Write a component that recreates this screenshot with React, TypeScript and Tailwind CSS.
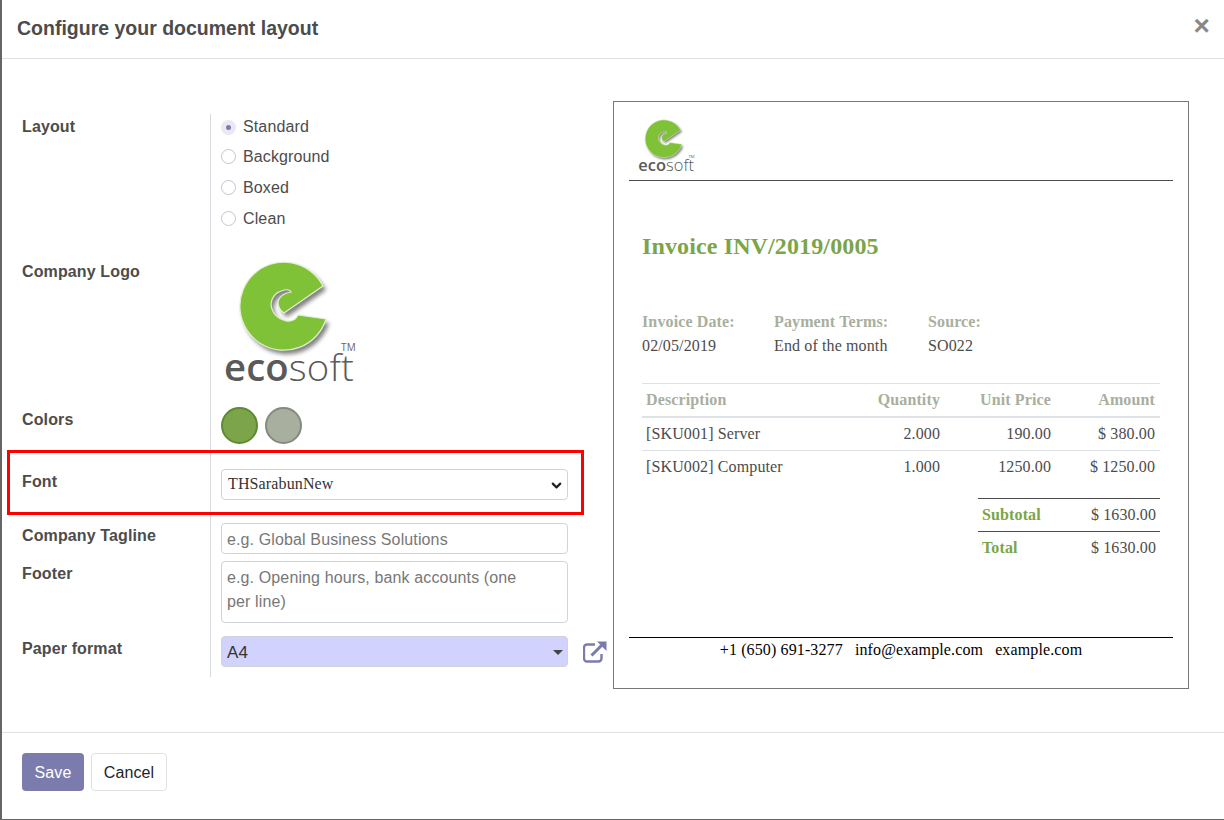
import { ChevronDown } from "lucide-react";

function EcosoftLogo({ className, id }: { className: string; id: string }) {
  const e =
    "M323 286 A44 44 0 1 0 326 319 L298 315 Q295 322 286 321 Q272 317 271 304 Q272 293 284 290 Q290 289 291 292 Q280 294 278 302 Q278 309 284 313 Z";
  return (
    <svg viewBox="221 259 140 126" className={`overflow-visible ${className}`}>
      <defs>
        <filter id={id} x="-20%" y="-20%" width="140%" height="140%">
          <feGaussianBlur stdDeviation="2" />
        </filter>
      </defs>
      <path d={e} fill="#555" opacity="0.75" transform="translate(3 4)" filter={`url(#${id})`} />
      <path d={e} fill="#7fc137" stroke="#e4efd2" strokeWidth="1.2" />
      <text
        x="224"
        y="381"
        fontFamily="'Open Sans', sans-serif"
        fontSize="37"
        fill="#5a5a5a"
        textLength="130"
        lengthAdjust="spacingAndGlyphs"
      >
        <tspan fontWeight="600">eco</tspan>
        <tspan fontWeight="300">soft</tspan>
      </text>
      <text x="341" y="351" fontFamily="'Open Sans', sans-serif" fontSize="10" fill="#666">
        TM
      </text>
    </svg>
  );
}

function Radio({ label, checked, first }: { label: string; checked?: boolean; first?: boolean }) {
  return (
    <div className={`flex items-center gap-[7px] ${first ? "h-[30px] pt-[2px]" : "h-[31px]"}`}>
      {checked ? (
        <span className="w-[15px] h-[15px] rounded-full bg-[#e9e9f3] flex items-center justify-center">
          <span className="w-[5px] h-[5px] rounded-full bg-[#7c7bad]" />
        </span>
      ) : (
        <span className="w-[15px] h-[15px] rounded-full border border-[#c3c6d4] bg-white" />
      )}
      <span>{label}</span>
    </div>
  );
}

function Row({
  label,
  height,
  children,
}: {
  label: string;
  height: string;
  children: React.ReactNode;
}) {
  return (
    <div className={`flex ${height}`}>
      <div className="w-[188px] shrink-0 font-bold pt-px">{label}</div>
      <div className="border-l border-[#d8dadd] pl-[10px] flex-1 min-w-0">{children}</div>
    </div>
  );
}

export default function App() {
  return (
    <div className="h-[820px] w-[1224px] bg-[#666] pl-[2px] pb-px overflow-hidden font-['Liberation_Sans',Arial,sans-serif] text-base tracking-[0.125px] text-[#4c4c4c]">
      <div className="relative h-full bg-white flex flex-col">
        {/* En-tête */}
        <div className="h-[59px] shrink-0 border-b border-[#dee2e6] flex items-center justify-between pl-[15px] pr-[14px]">
          <h4 className="text-[19.5px] tracking-normal font-bold leading-none -mt-[1px]">Configure your document layout</h4>
          <span className="text-[28px] font-bold leading-none text-[#888] -mt-[6px]">×</span>
        </div>

        {/* Corps */}
        <div className="flex-1 flex min-h-0">
          <div className="w-[611px] shrink-0 pl-[20px] pt-[55px]">
            <Row label="Layout" height="h-[145px]">
              <div className="-mt-[3px]">
                <Radio label="Standard" checked first />
                <Radio label="Background" />
                <Radio label="Boxed" />
                <Radio label="Clean" />
              </div>
            </Row>
            <Row label="Company Logo" height="h-[148px]">
              <EcosoftLogo id="logo-form" className="w-[140px] h-[126px]" />
            </Row>
            <Row label="Colors" height="h-[62px]">
              <div className="flex gap-[7px]">
                <span className="w-[37px] h-[37px] rounded-full bg-[#7ba548] border-2 border-[#5f8a35]" />
                <span className="w-[37px] h-[37px] rounded-full bg-[#a9af9e] border-2 border-[#858a7e]" />
              </div>
            </Row>
            <Row label="Font" height="h-[54px]">
              <div className="relative w-[347px]">
                <select className="block w-full h-[31px] appearance-none border border-[#ced4da] rounded-[4px] bg-white pl-[6px] pb-[2px] font-['Liberation_Serif',serif] text-[#333] outline-none">
                  <option>THSarabunNew</option>
                </select>
                <ChevronDown size={15} strokeWidth={3.5} className="absolute right-[4px] top-[9px] text-[#222]" />
              </div>
            </Row>
            <Row label="Company Tagline" height="h-[38px]">
              <input
                placeholder="e.g. Global Business Solutions"
                className="block w-[347px] h-[31px] border border-[#ced4da] rounded-[4px] px-[5px] pt-[2px] placeholder:text-[#777] outline-none"
              />
            </Row>
            <Row label="Footer" height="h-[75px]">
              <textarea
                placeholder="e.g. Opening hours, bank accounts (one per line)"
                className="block w-[347px] h-[62px] border border-[#ced4da] rounded-[4px] pl-[5px] pr-[30px] py-[4px] leading-6 placeholder:text-[#777] outline-none resize-none"
              />
            </Row>
            <Row label="Paper format" height="h-[41px]">
              <div className="flex items-start">
                <div className="relative w-[347px]">
                  <select className="block w-full h-[31px] appearance-none border border-[#ced4da] rounded-[4px] bg-[#d2d2ff] px-[5px] pt-[2px] text-[17px] text-[#333] outline-none">
                    <option>A4</option>
                  </select>
                  <span className="absolute right-[5px] top-[14px] border-x-[5px] border-x-transparent border-t-[5px] border-t-[#444]" />
                </div>
                <svg viewBox="0 0 24 22" className="w-[24px] h-[22px] ml-[15px] mt-[5px] text-[#7c7bad]" fill="none" stroke="currentColor">
                  <path d="M18.5 13v4.5a3 3 0 0 1-3 3H4a3 3 0 0 1-3-3V6.5a3 3 0 0 1 3-3h8" strokeWidth="2.4" />
                  <path d="M8.5 14.5 20 3" strokeWidth="3" />
                  <path d="M14 0.5h9.5V10z" fill="currentColor" stroke="none" />
                </svg>
              </div>
            </Row>
          </div>

          {/* Aperçu */}
          <div className="pt-[42px]">
            <div className="w-[576px] h-[588px] border border-[#777] bg-white font-['Liberation_Serif',serif] px-[15px] flex flex-col">
              <div className="h-[79px] shrink-0 border-b border-[#4c4c4c] pl-[8px] pt-[16px]">
                <EcosoftLogo id="logo-preview" className="w-[60px] h-[55px]" />
              </div>
              <div className="px-[13px] flex-1">
                <h2 className="text-[24px] leading-[30px] font-bold text-[#7ba548] mt-[50px]">Invoice INV/2019/0005</h2>
                <div className="flex mt-[49px] leading-6">
                  <div className="w-[132px]">
                    <div className="font-bold text-[#a9af9e]">Invoice Date:</div>
                    <div>02/05/2019</div>
                  </div>
                  <div className="w-[154px]">
                    <div className="font-bold text-[#a9af9e]">Payment Terms:</div>
                    <div>End of the month</div>
                  </div>
                  <div>
                    <div className="font-bold text-[#a9af9e]">Source:</div>
                    <div>SO022</div>
                  </div>
                </div>
                <table className="w-[518px] mt-[25px] border-t border-[#dee2e6]">
                  <thead>
                    <tr className="h-[33px] font-bold text-[#a9af9e] border-b-2 border-[#dee2e6]">
                      <td className="pl-[4px]">Description</td>
                      <td className="text-right w-[100px]">Quantity</td>
                      <td className="text-right w-[111px]">Unit Price</td>
                      <td className="text-right w-[109px] pr-[5px]">Amount</td>
                    </tr>
                  </thead>
                  <tbody>
                    <tr className="h-[34px] border-b border-[#dee2e6]">
                      <td className="pl-[4px]">[SKU001] Server</td>
                      <td className="text-right">2.000</td>
                      <td className="text-right">190.00</td>
                      <td className="text-right pr-[5px]">$ 380.00</td>
                    </tr>
                    <tr className="h-[33px]">
                      <td className="pl-[4px]">[SKU002] Computer</td>
                      <td className="text-right">1.000</td>
                      <td className="text-right">1250.00</td>
                      <td className="text-right pr-[5px]">$ 1250.00</td>
                    </tr>
                  </tbody>
                </table>
                <div className="ml-auto w-[182px] mt-[14px]">
                  <div className="h-[33px] border-t border-[#4c4c4c] flex items-center justify-between px-[4px] pt-[1px]">
                    <span className="font-bold text-[#7ba548]">Subtotal</span>
                    <span>$ 1630.00</span>
                  </div>
                  <div className="h-[33px] border-t border-[#4c4c4c] flex items-center justify-between px-[4px]">
                    <span className="font-bold text-[#7ba548]">Total</span>
                    <span>$ 1630.00</span>
                  </div>
                </div>
              </div>
              <div className="h-[51px] shrink-0 border-t border-black text-black text-center leading-6 flex justify-center gap-[12px]">
                <span>+1 (650) 691-3277</span>
                <span>info@example.com</span>
                <span>example.com</span>
              </div>
            </div>
          </div>
        </div>

        {/* Pied */}
        <div className="h-[87px] shrink-0 border-t border-[#dee2e6] flex gap-[7px] pl-[20px] pt-[20px]">
          <button className="w-[62px] h-[38px] rounded-[4px] bg-[#7c7bad] text-white pt-px">Save</button>
          <button className="w-[76px] h-[38px] rounded-[4px] border border-[#dee2e6] bg-white text-[#212529] pt-px">Cancel</button>
        </div>

        {/* Cadre rouge */}
        <div className="absolute left-[5px] top-[450px] w-[577px] h-[65px] border-[3px] border-[#ff0000] pointer-events-none" />
      </div>
    </div>
  );
}
